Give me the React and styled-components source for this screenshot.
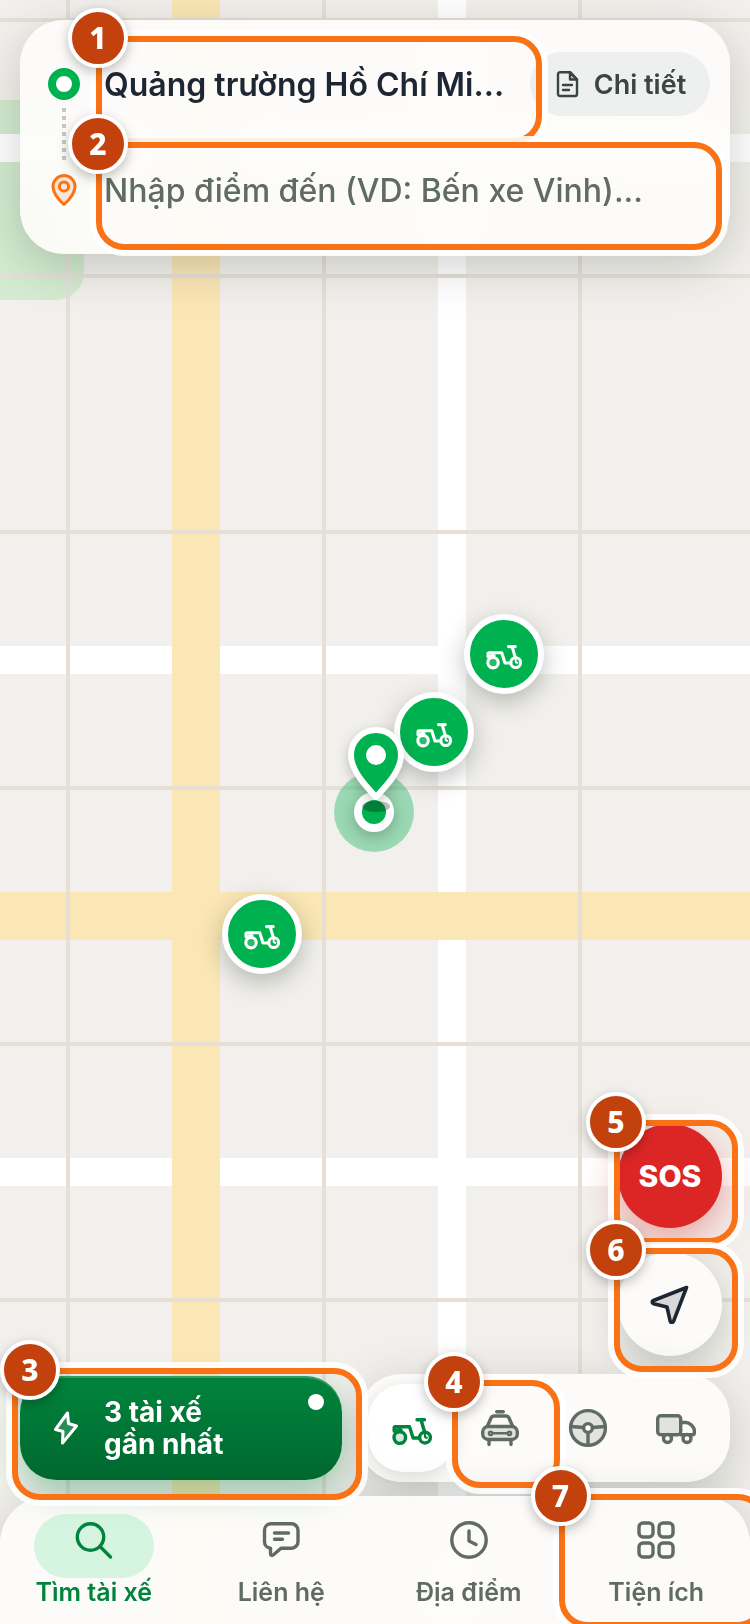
import React, { useState } from "react";
import styled, { createGlobalStyle, css } from "styled-components";

const GlobalStyle = createGlobalStyle`
  * {
    box-sizing: border-box;
  }

  body {
    margin: 0;
    background: #f1f0eb;
    font-family: Inter, "Noto Sans", sans-serif;
    color: #1c2733;
  }

  button,
  input {
    font: inherit;
    color: inherit;
    border: 0;
    margin: 0;
    padding: 0;
    background: none;
  }
`;

/* ---------- icons ---------- */

const Icon = ({ size = 40, box = "0 0 40 40", weight = 3.4, children }) => (
  <svg
    width={size}
    height={size}
    viewBox={box}
    fill="none"
    stroke="currentColor"
    strokeWidth={weight}
    strokeLinecap="round"
    strokeLinejoin="round"
    aria-hidden="true"
  >
    {children}
  </svg>
);

const tint = { fill: "currentColor", fillOpacity: 0.16 };

const MopedIcon = ({ size }) => (
  <Icon size={size} box="0 -10 40 40">
    <circle cx="7.8" cy="19.6" r="5.8" {...tint} />
    <circle cx="33" cy="19.6" r="5.4" />
    <path d="M2.2 13V9.700a1 1 0 0 1 1-1h14.300l3.600 11.300h6.500" />
    <path d="M3 13.200c2-1.400 4-1.600 6-1.200" />
    <path d="M25 1.800h7.500M29 1.800l3.700 12.500" />
    <path d="M33 16.500v1.800a1.400 1.400 0 0 0 1.800 1.400" strokeWidth="2.2" />
  </Icon>
);

const TaxiIcon = () => (
  <Icon box="-1 -2 40 40">
    <path d="M15.700 1.700h6.600" />
    <path d="M6.500 16l3.600-8.200A3 3 0 0 1 13 6h12a3 3 0 0 1 2.900 1.800L31.500 16" />
    <rect x="1.700" y="16.500" width="34.600" height="13" rx="5.500" {...tint} />
    <circle cx="9.600" cy="23.300" r="1.200" />
    <circle cx="28.400" cy="23.300" r="1.200" />
    <path d="M13 23.300h12" strokeWidth="2.600" />
    <path d="M8 30v4.500M30 30v4.500" />
  </Icon>
);

const WheelIcon = () => (
  <Icon>
    <circle cx="20" cy="20" r="17.400" {...tint} />
    <circle cx="20" cy="20" r="4.400" fill="#fcfbf9" />
    <path d="M3 18.500l12.500 1M37 18.500l-12.500 1M20 25v12" />
  </Icon>
);

const TruckIcon = () => (
  <Icon box="0 -6 40 40">
    <rect x="1.700" y="1.700" width="23" height="19" rx="3" {...tint} />
    <path d="M24.700 8.500h5.300c3.500 0 8 4 8.300 7.500v3c0 1-.600 1.700-1.700 1.700H24.700" />
    <circle cx="11.500" cy="24.500" r="4" fill="#fcfbf9" />
    <circle cx="31" cy="24.500" r="4" fill="#fcfbf9" />
  </Icon>
);

const SearchIcon = () => (
  <Icon>
    <circle cx="16.500" cy="17" r="13.200" />
    <path d="M26 26.500l10.500 10.500" />
  </Icon>
);

const ChatIcon = () => (
  <Icon>
    <path d="M9.500 3.800h21a6.500 6.500 0 0 1 6.500 6.500v11.400a6.500 6.500 0 0 1-6.500 6.500H20l-7.500 6.600c-1.600 1.300-3 .500-3-1.200v-5.400a6.500 6.500 0 0 1-6-6.500V10.300a6.500 6.500 0 0 1 6-6.500z" />
    <path d="M13.500 13h14M13.500 19.200h8" />
  </Icon>
);

const ClockIcon = () => (
  <Icon>
    <circle cx="20" cy="20" r="17.200" />
    <path d="M20 11v10l7 3.500" />
  </Icon>
);

const GridIcon = () => (
  <Icon>
    {[
      [3, 3],
      [23, 3],
      [3, 23],
      [23, 23],
    ].map(([x, y]) => (
      <rect key={`${x}-${y}`} x={x} y={y} width="14" height="14" rx="4" />
    ))}
  </Icon>
);

const DocIcon = () => (
  <Icon size={28} box="0 0 28 28" weight={2.4}>
    <path d="M6 2.200h10L23 9.500V24a2 2 0 0 1-2 2H6a2 2 0 0 1-2-2V4.200a2 2 0 0 1 2-2z" />
    <path d="M16 2.200V9.500H23z" {...tint} />
    <path d="M9 15h9M9 20h6" />
  </Icon>
);

const BoltIcon = () => (
  <Icon size={36} box="0 0 36 36" weight={3}>
    <path d="M19.500 3L7.500 19.500l7.500 2L14.500 33 28.500 16l-8-2.500z" {...tint} />
  </Icon>
);

const ArrowIcon = () => (
  <Icon weight={3.600}>
    <path
      d="M36.500 3.500L3.500 16.500c-1.800.800-1.700 2.800 0 3.300l13.500 3.200 3.200 14.200c.500 1.600 2.500 1.700 3.400 0z"
      fill="currentColor"
      fillOpacity="0.16"
    />
  </Icon>
);

const PinOutlineIcon = () => (
  <Icon size={32} box="0 0 32 32" weight={3}>
    <path d="M16 30.500C11 26 5 20 5 12.500a11 11 0 0 1 22 0C27 20 21 26 16 30.500z" {...tint} />
    <circle cx="16" cy="12.500" r="4.600" />
  </Icon>
);

/* ---------- numbered highlights ---------- */

const SpotFrame = styled.span`
  position: absolute;
  z-index: 10;
  inset: ${({ $tight }) =>
    $tight ? "-4px -16px -16px -4px" : "-8px -20px -20px -8px"};
  border: 6px solid #f97316;
  border-radius: 28px;
  box-shadow: 0 0 0 6px rgba(255, 255, 255, 0.88);
  pointer-events: none;
`;

const SpotBadge = styled.span`
  position: absolute;
  top: -34px;
  left: ${({ $edge }) => ($edge ? "-18px" : "-34px")};
  display: flex;
  align-items: center;
  justify-content: center;
  width: 60px;
  height: 60px;
  border: 4px solid #fff;
  border-radius: 50%;
  background: #c2410c;
  box-shadow: 0 4px 12px rgba(0, 0, 0, 0.25);
  color: #fff;
  font: 800 30px/1 "Noto Sans", sans-serif;
`;

const Spot = ({ n, tight, edge }) => (
  <SpotFrame $tight={tight}>
    <SpotBadge $edge={edge}>{n}</SpotBadge>
  </SpotFrame>
);

/* ---------- map ---------- */

const Screen = styled.div`
  position: relative;
  display: flex;
  flex-direction: column;
  min-height: 100vh;
  overflow: hidden;
`;

const MapCanvas = styled.div`
  position: absolute;
  inset: 0;
  background: #f2f0ec;
`;

const Park = styled.div`
  position: absolute;
  top: 100px;
  left: 0;
  width: 84px;
  height: 200px;
  border-radius: 0 28px 28px 0;
  background: #d3ebd0;
`;

const Roads = styled.div`
  position: absolute;
  inset: 0;
  background-image:
    linear-gradient(90deg, #e5dfd8 4px, transparent 4px),
    linear-gradient(#e5dfd8 4px, transparent 4px),
    linear-gradient(90deg, #fbe6b5 48px, transparent 48px),
    linear-gradient(#fbe6b5 48px, transparent 48px),
    linear-gradient(90deg, #fff 28px, transparent 28px),
    linear-gradient(#fff 28px, transparent 28px);
  background-size:
    256px 100%,
    100% 256px,
    1024px 100%,
    100% 1024px,
    512px 100%,
    100% 512px;
  background-position:
    66px 0,
    0 18px,
    172px 0,
    0 892px,
    438px 0,
    0 134px;
  background-repeat: repeat;
`;

const Marker = styled.div`
  position: absolute;
  top: ${({ $y }) => $y}px;
  left: ${({ $x }) => $x}px;
  display: flex;
  align-items: center;
  justify-content: center;
  width: 80px;
  height: 80px;
  border: 6px solid #fff;
  border-radius: 50%;
  background: #00b14f;
  box-shadow: 0 8px 24px rgba(20, 40, 30, 0.28);
  color: #fff;
`;

const Pulse = styled.div`
  position: absolute;
  top: 772px;
  left: 334px;
  display: flex;
  align-items: center;
  justify-content: center;
  width: 80px;
  height: 80px;
  border-radius: 50%;
  background: rgba(0, 177, 79, 0.36);
`;

const PulseDot = styled.div`
  width: 40px;
  height: 40px;
  border: 8px solid #fff;
  border-radius: 50%;
  background: #00b14f;
  box-shadow: 0 4px 16px rgba(20, 40, 30, 0.3);
`;

const PickupPin = styled.svg`
  position: absolute;
  top: 724px;
  left: 346px;
  filter: drop-shadow(0 4px 6px rgba(20, 40, 30, 0.25));
`;

const PinShadow = styled.div`
  position: absolute;
  top: 801px;
  left: 362px;
  width: 28px;
  height: 11px;
  border-radius: 50%;
  background: rgba(0, 0, 0, 0.26);
`;

const MOPEDS = [
  [464, 614],
  [394, 692],
  [222, 894],
];

const CityMap = () => (
  <MapCanvas>
    <Park />
    <Roads />
    <Pulse>
      <PulseDot />
    </Pulse>
    {MOPEDS.map(([x, y]) => (
      <Marker key={x} $x={x} $y={y}>
        <MopedIcon size={36} />
      </Marker>
    ))}
    <PinShadow />
    <PickupPin width="60" height="80" viewBox="0 0 60 80" aria-hidden="true">
      <path
        d="M30 73C22 64 5 48 5 31a25 25 0 0 1 50 0C55 48 38 64 30 73z"
        fill="#00b14f"
        stroke="#fff"
        strokeWidth="6"
        strokeLinejoin="round"
      />
      <circle cx="30" cy="31" r="10" fill="#fff" />
    </PickupPin>
  </MapCanvas>
);

/* ---------- panels ---------- */

// The frosted surface sits in ::before so highlights can rise above the other panels.
const frosted = css`
  position: relative;

  &::before {
    content: "";
    position: absolute;
    inset: 0;
    border-radius: inherit;
    background: rgba(253, 252, 250, 0.93);
    backdrop-filter: blur(24px);
    box-shadow: 0 12px 48px rgba(30, 45, 35, 0.22);
  }

  > * {
    position: relative;
  }
`;

const TripCard = styled.header`
  ${frosted}
  display: flex;
  gap: 24px;
  margin: 20px 20px 0;
  padding: 12px 20px 12px 28px;
  border-radius: 44px;
`;

const Rail = styled.div`
  display: flex;
  flex-direction: column;
  align-items: center;
  gap: 8px;
  width: 32px;
  padding-top: 36px;
  color: #f97316;
`;

const StartDot = styled.span`
  width: 32px;
  height: 32px;
  border: 8px solid #00b14f;
  border-radius: 50%;
  background: #fff;
`;

const Dots = styled.span`
  width: 4px;
  height: 52px;
  margin-bottom: 6px;
  background: repeating-linear-gradient(#c3c9c5 0 4px, transparent 4px 8px);
`;

const Fields = styled.div`
  display: flex;
  flex: 1;
  flex-direction: column;
  gap: 2px;
  min-width: 0;
`;

const Row = styled.div`
  display: flex;
  align-items: center;
  gap: 8px;
  height: 104px;
  padding-right: ${({ $inset }) => ($inset ? "8px" : "0")};
`;

const Field = styled.label`
  position: relative;
  flex: 1;
  min-width: 0;
`;

const FieldInput = styled.input`
  display: block;
  width: 100%;
  height: 80px;
  font-size: 32px;
  font-weight: ${({ $strong }) => ($strong ? 600 : 500)};
  text-overflow: ellipsis;
  outline: none;

  &::placeholder {
    color: #5f6b64;
    opacity: 1;
  }
`;

const DetailButton = styled.button`
  display: flex;
  align-items: center;
  justify-content: center;
  gap: 12px;
  width: 180px;
  height: 64px;
  border-radius: 32px;
  background: #edf0ef;
  color: #3a4540;
  font-size: 27px;
  font-weight: 600;
  white-space: nowrap;
`;

const Fabs = styled.div`
  display: flex;
  flex-direction: column;
  align-items: flex-end;
  gap: 24px;
  margin-top: auto;
  padding: 0 28px 18px;
`;

const Fab = styled.button`
  position: relative;
  display: flex;
  align-items: center;
  justify-content: center;
  width: 104px;
  height: 104px;
  border-radius: 50%;
  background: ${({ $danger }) => ($danger ? "#dc2626" : "#fcfbf9")};
  box-shadow: 0 12px 36px
    ${({ $danger }) =>
      $danger ? "rgba(220, 38, 38, 0.4)" : "rgba(30, 45, 35, 0.22)"};
  color: ${({ $danger }) => ($danger ? "#fff" : "#1c2733")};
  font-size: 30px;
  font-weight: 800;
`;

const Dock = styled.div`
  display: flex;
  align-items: center;
  gap: 16px;
  padding: 0 20px 14px;
`;

const NearestButton = styled.button`
  position: relative;
  z-index: 2;
  display: flex;
  flex: 1;
  align-items: center;
  gap: 20px;
  height: 104px;
  padding: 0 18px 0 28px;
  border-radius: 36px;
  background: linear-gradient(#00843d, #00682f);
  box-shadow:
    inset 0 2px 0 rgba(255, 255, 255, 0.2),
    0 12px 32px rgba(0, 132, 61, 0.35);
  color: #fff;
  font-size: 28px;
  font-weight: 700;
  line-height: 32px;
  text-align: left;
`;

const LiveDot = styled.span`
  align-self: flex-start;
  width: 16px;
  height: 16px;
  margin: 18px 0 0 auto;
  border-radius: 50%;
  background: #fff;
`;

const Services = styled.div`
  ${frosted}
  display: flex;
  padding: 10px;
  border-radius: 44px;
`;

const ServiceTab = styled.button`
  display: flex;
  align-items: center;
  justify-content: center;
  width: 88px;
  height: 88px;
  border-radius: 36px;
  color: #5f6b64;

  ${({ $active }) =>
    $active &&
    css`
      background: #fff;
      box-shadow: 0 4px 16px rgba(30, 45, 35, 0.14);
      color: #00843d;
    `}
`;

const TabBar = styled.nav`
  ${frosted}
  display: flex;
  gap: 8px;
  padding: 6px 4px 16px;
  border-radius: 48px 48px 0 0;
`;

const TabLink = styled.a`
  display: flex;
  flex: 1 1 0;
  flex-direction: column;
  align-items: center;
  height: 106px;
  padding-top: 12px;
  color: ${({ $active }) => ($active ? "#00843d" : "#5f6b64")};
  font-size: 25px;
  font-weight: 600;
  line-height: 28px;
  text-decoration: none;
  white-space: nowrap;
`;

const TabIcon = styled.span`
  display: flex;
  justify-content: center;
  width: 120px;
  height: 64px;
  padding-top: 6px;
  border-radius: 32px;
  background: ${({ $active }) => ($active ? "#d5f5e1" : "transparent")};
`;

const SERVICES = [
  { id: "moped", label: "Xe máy", icon: MopedIcon },
  { id: "taxi", label: "Taxi", icon: TaxiIcon, spot: 4 },
  { id: "driver", label: "Lái hộ", icon: WheelIcon },
  { id: "truck", label: "Xe tải", icon: TruckIcon },
];

const TABS = [
  { id: "find", label: "Tìm tài xế", icon: SearchIcon },
  { id: "contact", label: "Liên hệ", icon: ChatIcon },
  { id: "places", label: "Địa điểm", icon: ClockIcon },
  { id: "tools", label: "Tiện ích", icon: GridIcon, spot: 7 },
];

const App = () => {
  const [service, setService] = useState("moped");
  const [tab, setTab] = useState("find");
  const [destination, setDestination] = useState("");

  return (
    <>
      <GlobalStyle />
      <Screen>
        <CityMap />

        <TripCard>
          <Rail>
            <StartDot />
            <Dots />
            <PinOutlineIcon />
          </Rail>
          <Fields>
            <Row>
              <Field>
                <FieldInput
                  $strong
                  aria-label="Điểm đón"
                  readOnly
                  value="Quảng trường Hồ Chí Mi..."
                />
                <Spot n={1} />
              </Field>
              <DetailButton type="button">
                <DocIcon />
                Chi tiết
              </DetailButton>
            </Row>
            <Row $inset>
              <Field>
                <FieldInput
                  aria-label="Điểm đến"
                  placeholder="Nhập điểm đến (VD: Bến xe Vinh)..."
                  value={destination}
                  onChange={(e) => setDestination(e.target.value)}
                />
                <Spot n={2} />
              </Field>
            </Row>
          </Fields>
        </TripCard>

        <Fabs>
          <Fab type="button" $danger>
            SOS
            <Spot n={5} tight />
          </Fab>
          <Fab type="button" aria-label="Vị trí của tôi">
            <ArrowIcon />
            <Spot n={6} tight />
          </Fab>
        </Fabs>

        <Dock>
          <NearestButton type="button">
            <BoltIcon />
            <span>
              3 tài xế
              <br />
              gần nhất
            </span>
            <LiveDot />
            <Spot n={3} edge />
          </NearestButton>
          <Services>
            {SERVICES.map(({ id, label, icon: Glyph, spot }) => (
              <ServiceTab
                key={id}
                type="button"
                aria-label={label}
                aria-pressed={service === id}
                $active={service === id}
                onClick={() => setService(id)}
              >
                <Glyph />
                {spot && <Spot n={spot} tight />}
              </ServiceTab>
            ))}
          </Services>
        </Dock>

        <TabBar>
          {TABS.map(({ id, label, icon: Glyph, spot }) => (
            <TabLink
              key={id}
              href={`#${id}`}
              $active={tab === id}
              onClick={() => setTab(id)}
            >
              <TabIcon $active={tab === id}>
                <Glyph />
              </TabIcon>
              {label}
              {spot && <Spot n={spot} />}
            </TabLink>
          ))}
        </TabBar>
      </Screen>
    </>
  );
};

export default App;
